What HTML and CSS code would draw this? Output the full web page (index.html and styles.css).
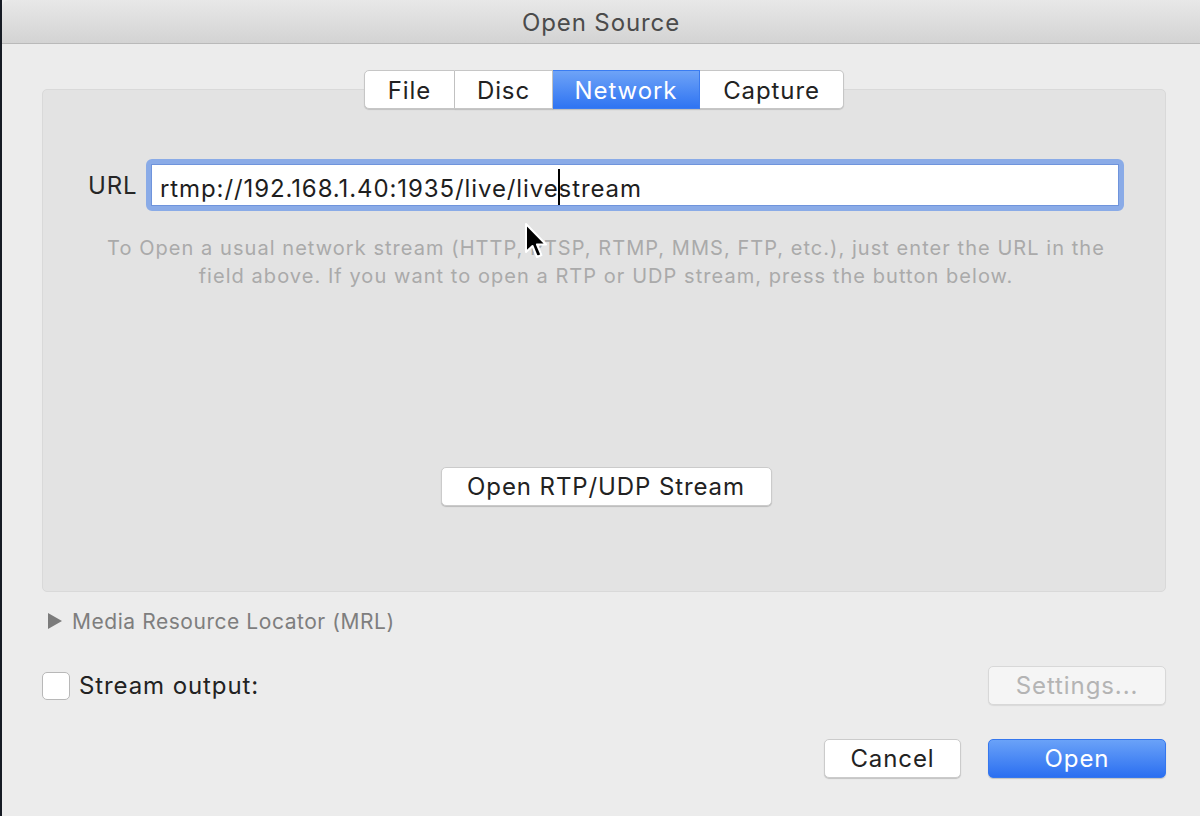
FILE: index.html
```html
<!DOCTYPE html>
<html lang="en">
<head>
  <meta charset="UTF-8" />
  <title>Open Source</title>
  <link rel="stylesheet" href="styles.css">
</head>
<body>
  <div class="window">
    <div class="titlebar">Open Source</div>

    <div class="content">
      <div class="tabs">
        <span class="tab">File</span>
        <span class="tab">Disc</span>
        <span class="tab active">Network</span>
        <span class="tab">Capture</span>
      </div>

      <div class="tabbox">
        <div class="url-row">
          <label class="url-label">URL</label>
          <div class="url-field">
            <div class="url-input">rtmp://192.168.1.40:1935/live/live<span class="caret"></span>stream</div>
          </div>
        </div>
        <p class="help">
          To Open a usual network stream (HTTP, RTSP, RTMP, MMS, FTP, etc.), just enter the URL in the<br>
          field above. If you want to open a RTP or UDP stream, press the button below.
        </p>
        <div class="rtp-row">
          <button class="btn rtp">Open RTP/UDP Stream</button>
        </div>
      </div>

      <div class="mrl">
        <span class="disclosure"></span>
        Media Resource Locator (MRL)
      </div>

      <div class="stream-row">
        <label class="check-label"><span class="checkbox"></span>Stream output:</label>
        <button class="btn settings" disabled>Settings...</button>
      </div>

      <div class="actions">
        <button class="btn cancel">Cancel</button>
        <button class="btn primary">Open</button>
      </div>
    </div>

    <svg class="cursor" width="26" height="40" viewBox="0 0 26 40">
      <path d="M2 2 L2 30 L8.5 24 L13 35 L17.5 33 L13 22.5 L22 22.5 Z" fill="#000" stroke="#fff" stroke-width="2" stroke-linejoin="round"/>
    </svg>
  </div>
</body>
</html>
```

FILE: styles.css
```css
body {
  margin: 0;
  font-family: Inter, "Liberation Sans", Arial, sans-serif;
  letter-spacing: 0.9px;
  background: #ececec;
  overflow: hidden;
}
.window {
  position: relative;
  height: 816px;
  background: #ececec;
  border-left: 2px solid #161b24;
  box-sizing: border-box;
}
.titlebar {
  height: 43px;
  line-height: 46px;
  text-align: center;
  font-size: 24px;
  color: #4b4b4b;
  background: linear-gradient(to bottom, #e8e8e8, #d3d3d3);
  border-bottom: 1px solid #b9b9b9;
  border-top-left-radius: 8px;
}
.content {
  padding: 0 34px 0 40px;
}
.tabs {
  display: flex;
  justify-content: center;
  margin-top: 26px;
  margin-bottom: -20px;
  position: relative;
  z-index: 1;
}
.tab {
  height: 37px;
  line-height: 39px;
  font-size: 24px;
  color: #222;
  background: #fff;
  border: 1px solid #c6c6c6;
  border-left: none;
  box-shadow: 0 1px 1px rgba(0, 0, 0, 0.15);
  text-align: center;
}
.tab:nth-child(1) { width: 89px; border-left: 1px solid #c6c6c6; border-radius: 5px 0 0 5px; }
.tab:nth-child(2) { width: 97px; }
.tab:nth-child(3) { width: 146px; }
.tab:nth-child(4) { width: 143px; border-radius: 0 5px 5px 0; }
.tab.active {
  color: #fff;
  background: linear-gradient(to bottom, #6ea3f7, #2f74f2);
  border-color: #3a7cf2;
}
.tabbox {
  height: 501px;
  background: #e3e3e3;
  border: 1px solid #d9d9d9;
  border-radius: 5px;
  padding: 0 41px 0 45px;
}
.url-row {
  display: flex;
  align-items: center;
  margin-top: 69px;
}
.url-label {
  font-size: 24px;
  color: #262626;
  width: 60px;
}
.url-field {
  flex: 1;
  margin-left: -2px;
  border: 5px solid #8aabe7;
  border-radius: 6px;
  height: 42px;
}
.url-input {
  height: 40px;
  line-height: 47px;
  background: #fff;
  border: 1px solid #6f94dc;
  font-size: 24px;
  color: #1e1e1e;
  padding-left: 8px;
  white-space: nowrap;
  overflow: hidden;
}
.caret {
  display: inline-block;
  width: 2px;
  height: 36px;
  background: #000;
  vertical-align: -8px;
  margin: 0 -1px;
}
.help {
  margin: 23px 0 0;
  text-align: center;
  font-size: 20px;
  line-height: 28px;
  letter-spacing: 1.05px;
  color: #aaa;
}
.rtp-row {
  display: flex;
  justify-content: center;
  margin-top: 177px;
}
.btn {
  font-family: inherit;
  letter-spacing: 0.9px;
  font-size: 24px;
  color: #222;
  background: #fff;
  border: 1px solid #cbcbcb;
  border-radius: 5px;
  box-shadow: 0 1px 1px rgba(0, 0, 0, 0.18);
  height: 39px;
  padding: 0;
}
.rtp {
  width: 331px;
}
.mrl {
  display: flex;
  align-items: center;
  margin: 16px 0 0 6px;
  font-size: 21px;
  letter-spacing: 0.55px;
  color: #7e7e7e;
  height: 26px;
}
.disclosure {
  width: 0;
  height: 0;
  border-left: 14px solid #7b7b7b;
  border-top: 8px solid transparent;
  border-bottom: 8px solid transparent;
  margin-right: 10px;
}
.stream-row {
  display: flex;
  justify-content: space-between;
  align-items: center;
  margin-top: 32px;
}
.check-label {
  display: flex;
  align-items: center;
  font-size: 24px;
  color: #222;
}
.checkbox {
  width: 26px;
  height: 26px;
  background: #fff;
  border: 1px solid #b8b8b8;
  border-radius: 5px;
  margin-right: 9px;
}
.settings {
  width: 178px;
  color: #b4b4b4;
  background: #f5f5f5;
  border-color: #d8d8d8;
  box-shadow: 0 1px 1px rgba(0, 0, 0, 0.08);
}
.actions {
  display: flex;
  justify-content: flex-end;
  gap: 27px;
  margin-top: 34px;
}
.cancel {
  width: 137px;
}
.primary {
  width: 178px;
  color: #fff;
  background: linear-gradient(to bottom, #6aa2f8, #2b6ff1);
  border-color: #3577ee;
}
.cursor {
  position: absolute;
  left: 522px;
  top: 222px;
}
```
